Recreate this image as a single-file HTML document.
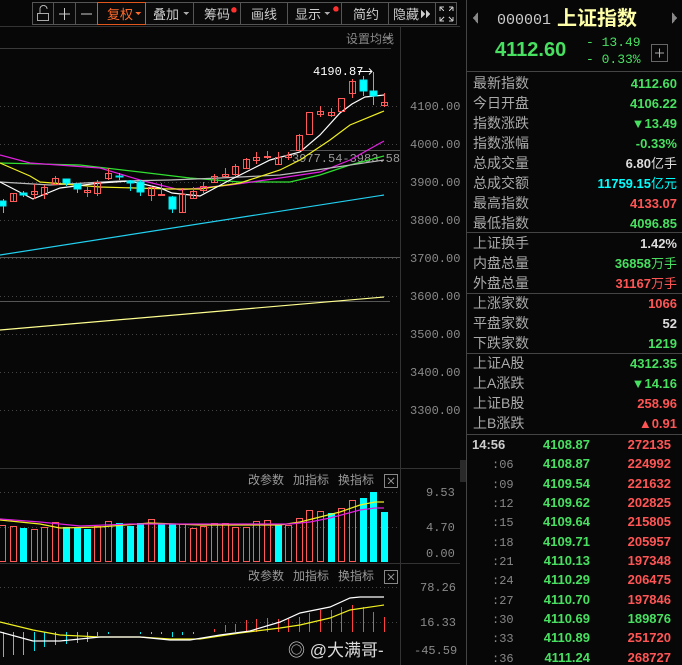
<!DOCTYPE html>
<html><head><meta charset="utf-8"><style>
html,body{margin:0;padding:0;background:#070707;width:682px;height:665px;overflow:hidden}
svg{display:block}
.cn{font-family:"Liberation Sans","Noto Sans CJK SC",sans-serif}
.mono{font-family:"Liberation Mono","DejaVu Sans Mono",monospace}
</style></head><body>
<svg width="682" height="665" viewBox="0 0 682 665" xmlns="http://www.w3.org/2000/svg" shape-rendering="crispEdges">
<rect width="682" height="665" fill="#070707"/>
<!-- toolbar -->
<g stroke="#555" fill="#0a0a0a">
<rect x="32.5" y="2.5" width="424" height="22"/>
</g>
<g stroke="#555">
<line x1="53.5" y1="2" x2="53.5" y2="25"/><line x1="75.5" y1="2" x2="75.5" y2="25"/><line x1="97.5" y1="2" x2="97.5" y2="25"/>
<line x1="145.5" y1="2" x2="145.5" y2="25"/><line x1="193.5" y1="2" x2="193.5" y2="25"/><line x1="240.5" y1="2" x2="240.5" y2="25"/>
<line x1="287.5" y1="2" x2="287.5" y2="25"/><line x1="341.5" y1="2" x2="341.5" y2="25"/><line x1="388.5" y1="2" x2="388.5" y2="25"/>
<line x1="435.5" y1="2" x2="435.5" y2="25"/>
</g>
<rect x="97.5" y="2.5" width="48" height="22" fill="none" stroke="#e0561c"/>
<!-- lock icon -->
<g fill="none" stroke="#aaa" stroke-width="1.2">
<rect x="37.5" y="13.5" width="11" height="7"/><path d="M40 13 V9 a3.5 3.5 0 0 1 7 0"/>
</g>
<g stroke="#ccc" stroke-width="1.2"><line x1="59" y1="14" x2="70" y2="14"/><line x1="64.5" y1="8" x2="64.5" y2="20"/><line x1="81" y1="14" x2="92" y2="14"/></g>
<g class="cn" font-size="13" fill="#ccc">
<text x="107" y="19" fill="#ff6a2a">复权</text>
<text x="153" y="19">叠加</text>
<text x="204" y="19">筹码</text>
<text x="251" y="19">画线</text>
<text x="295" y="19">显示</text>
<text x="353" y="19">简约</text>
<text x="393" y="19">隐藏</text>
<text x="346" y="43" fill="#888" font-size="12">设置均线</text>
</g>
<path d="M135 12 l3 3 l3 -3z" fill="#ff6a2a"/>
<path d="M183 12 l3 3 l3 -3z" fill="#aaa"/>
<path d="M324 12 l3 3 l3 -3z" fill="#aaa"/>
<path d="M385 37 l3 3 l3 -3z" fill="#888"/>
<circle cx="234" cy="10" r="2.8" fill="#ff3030"/><circle cx="336" cy="9" r="2.8" fill="#ff3030"/>
<path d="M421 10 l4 4 l-4 4z M426 10 l4 4 l-4 4z" fill="#ccc"/>
<g stroke="#ccc" fill="none" stroke-width="1"><path d="M440 11 v-4 h4 M453 7 h-4 M453 7 v4 M440 17 v4 h4 M453 21 h-4 M453 21 v-4 M440 7 l4 4 M453 7 l-4 4 M440 21 l4 -4 M453 21 l-4 -4"/></g>
<line x1="0" y1="26.5" x2="460" y2="26.5" stroke="#333"/>
<line x1="0" y1="48.5" x2="391" y2="48.5" stroke="#3a3a3a"/>
<!-- axis -->
<line x1="400.5" y1="26" x2="400.5" y2="665" stroke="#333"/>
<line x1="466.5" y1="0" x2="466.5" y2="665" stroke="#444"/>
<rect x="460" y="460" width="6" height="22" fill="#2a2a2a"/>
<!-- grid -->
<g stroke="#444" stroke-dasharray="1,3">
<line x1="0" y1="106.5" x2="400" y2="106.5"/><line x1="0" y1="144.5" x2="400" y2="144.5"/>
<line x1="0" y1="182.5" x2="400" y2="182.5"/><line x1="0" y1="220.5" x2="400" y2="220.5"/>
<line x1="0" y1="258.5" x2="400" y2="258.5"/><line x1="0" y1="296.5" x2="400" y2="296.5"/>
<line x1="0" y1="334.5" x2="400" y2="334.5"/><line x1="0" y1="372.5" x2="400" y2="372.5"/>
<line x1="0" y1="410.5" x2="400" y2="410.5"/>
<line x1="0" y1="492.5" x2="400" y2="492.5"/><line x1="0" y1="527.5" x2="400" y2="527.5"/>
<line x1="0" y1="587.5" x2="400" y2="587.5"/><line x1="0" y1="622.5" x2="400" y2="622.5"/>
</g>
<g stroke="#555"><line x1="290" y1="150.5" x2="400" y2="150.5"/><line x1="0" y1="257.5" x2="400" y2="257.5"/><line x1="0" y1="301.5" x2="390" y2="301.5"/></g>
<line x1="0" y1="468.5" x2="460" y2="468.5" stroke="#333"/>
<line x1="0" y1="563.5" x2="460" y2="563.5" stroke="#333"/>
<g class="mono" font-size="12" fill="#8a8a8a">
<text x="410" y="110">4100.00</text><text x="410" y="148">4000.00</text><text x="410" y="186">3900.00</text>
<text x="410" y="224">3800.00</text><text x="410" y="262">3700.00</text><text x="410" y="300">3600.00</text>
<text x="410" y="338">3500.00</text><text x="410" y="376">3400.00</text><text x="410" y="414">3300.00</text>
<text x="426" y="496">9.53</text><text x="426" y="531">4.70</text><text x="426" y="557">0.00</text>
<text x="420" y="591">78.26</text><text x="420" y="626">16.33</text><text x="414" y="654">-45.59</text>
<text x="292" y="162" fill="#999">3977.54-3983.58</text>
<text x="313" y="75" fill="#fff">4190.87</text>
</g>
<path d="M358 71.5 h14 M369 68.5 l3 3 l-3 3" stroke="#fff" fill="none" shape-rendering="auto"/>
<!-- long MAs -->
<g fill="none" shape-rendering="auto" stroke-width="1.2">
<polyline points="0,255 384,195" stroke="#22d0f0"/>
<polyline points="0,330 384,297" stroke="#ffff90"/>
<polyline points="0,163 80,165 140,172 190,178 240,182 290,182 320,175 350,165 384,156" stroke="#30e030"/>
<polyline points="0,155 30,163 100,168 140,180 180,190 230,185 280,178 320,172 350,160 384,141" stroke="#e020e0"/>
<polyline points="0,182 50,185 120,181 170,180 220,178 280,175 330,168 384,160" stroke="#bbb"/>
<polyline points="0,163 30,176 40,182 100,187 170,189 200,189 240,183 280,170 300,160 330,140 350,125 384,111" stroke="#f0f020"/>
<polyline points="0,182 33,199 60,188 100,183 130,181 160,188 172,193 200,196 230,180 270,160 300,152 320,135 340,113 352,104 365,97 384,95" stroke="#fff"/>
</g>
<!-- candles -->
<g stroke="#ff5a5a" fill="none">
<line x1="13.5" y1="193" x2="13.5" y2="202"/><rect x="10.5" y="193.5" width="6" height="8"/>
<line x1="34.5" y1="184" x2="34.5" y2="199"/><rect x="31.5" y="191.5" width="6" height="3"/>
<line x1="44.5" y1="185" x2="44.5" y2="199"/><rect x="41.5" y="187.5" width="6" height="7"/>
<line x1="55.5" y1="176" x2="55.5" y2="185"/><rect x="52.5" y="178.5" width="6" height="6"/>
<line x1="87.5" y1="187" x2="87.5" y2="197"/><rect x="84.5" y="190.5" width="6" height="2"/>
<line x1="97.5" y1="180" x2="97.5" y2="196"/><rect x="94.5" y="182.5" width="6" height="11"/>
<line x1="108.5" y1="168" x2="108.5" y2="180"/><rect x="105.5" y="173.5" width="6" height="5"/>
<line x1="151.5" y1="185" x2="151.5" y2="201"/><rect x="148.5" y="187.5" width="6" height="8"/>
<line x1="161.5" y1="183" x2="161.5" y2="195"/><rect x="158.5" y="194.5" width="6" height="1"/>
<line x1="182.5" y1="188" x2="182.5" y2="212"/><rect x="179.5" y="194.5" width="6" height="18"/>
<line x1="193.5" y1="187" x2="193.5" y2="199"/><rect x="190.5" y="191.5" width="6" height="7"/>
<line x1="203.5" y1="182" x2="203.5" y2="193"/><rect x="200.5" y="186.5" width="6" height="4"/>
<line x1="214.5" y1="174" x2="214.5" y2="183"/><rect x="211.5" y="176.5" width="6" height="6"/>
<line x1="225.5" y1="168" x2="225.5" y2="177"/><rect x="222.5" y="174.5" width="6" height="2"/>
<line x1="235.5" y1="164" x2="235.5" y2="176"/><rect x="232.5" y="166.5" width="6" height="8"/>
<line x1="246.5" y1="158" x2="246.5" y2="169"/><rect x="243.5" y="159.5" width="6" height="9"/>
<line x1="256.5" y1="152" x2="256.5" y2="164"/><rect x="253.5" y="157.5" width="6" height="3"/>
<line x1="267.5" y1="151" x2="267.5" y2="159"/><rect x="264.5" y="156.5" width="6" height="1"/>
<line x1="278.5" y1="152" x2="278.5" y2="165"/><rect x="275.5" y="157.5" width="6" height="7"/>
<line x1="288.5" y1="152" x2="288.5" y2="160"/><rect x="285.5" y="155.5" width="6" height="2"/>
<line x1="299.5" y1="134" x2="299.5" y2="151"/><rect x="296.5" y="135.5" width="6" height="15"/>
<rect x="306.5" y="112.5" width="6" height="22"/>
<line x1="320.5" y1="106" x2="320.5" y2="117"/><rect x="317.5" y="111.5" width="6" height="3"/>
<line x1="331.5" y1="108" x2="331.5" y2="117"/><rect x="328.5" y="112.5" width="6" height="3"/>
<rect x="338.5" y="98.5" width="6" height="13"/>
<line x1="352.5" y1="79" x2="352.5" y2="98"/><rect x="349.5" y="81.5" width="6" height="12"/>
<line x1="384.5" y1="93" x2="384.5" y2="107"/><rect x="381.5" y="102.5" width="6" height="3"/>
</g>
<g stroke="#00e8f0" fill="#00ffff">
<line x1="3.5" y1="199" x2="3.5" y2="213"/><rect x="0" y="201" width="6" height="5"/>
<line x1="23.5" y1="191" x2="23.5" y2="197"/><rect x="20" y="193" width="7" height="2"/>
<line x1="66.5" y1="179" x2="66.5" y2="186"/><rect x="63" y="179" width="7" height="4"/>
<line x1="77.5" y1="183" x2="77.5" y2="193"/><rect x="74" y="184" width="7" height="5"/>
<line x1="119.5" y1="173" x2="119.5" y2="180"/><rect x="116" y="176" width="7" height="1"/>
<line x1="130.5" y1="180" x2="130.5" y2="191"/><rect x="127" y="181" width="7" height="2"/>
<line x1="140.5" y1="180" x2="140.5" y2="196"/><rect x="137" y="182" width="7" height="10"/>
<line x1="172.5" y1="196" x2="172.5" y2="213"/><rect x="169" y="197" width="7" height="12"/>
<line x1="363.5" y1="76" x2="363.5" y2="96"/><rect x="360" y="80" width="7" height="11"/>
<line x1="373.5" y1="72" x2="373.5" y2="105"/><rect x="370" y="91" width="7" height="5"/>
</g>
<!-- volume -->
<g class="cn" font-size="12" fill="#999">
<text x="248" y="484">改参数</text><text x="293" y="484">加指标</text><text x="338" y="484">换指标</text>
<text x="248" y="580">改参数</text><text x="293" y="580">加指标</text><text x="338" y="580">换指标</text>
</g>
<g stroke="#888" fill="none"><rect x="384.5" y="474.5" width="13" height="13"/><path d="M388 478 l6 6 M394 478 l-6 6"/>
<rect x="384.5" y="570.5" width="13" height="13"/><path d="M388 574 l6 6 M394 574 l-6 6"/></g>
<g stroke="#ff5a5a" fill="none">
<rect x="-0.5" y="525.5" width="6" height="36"/><rect x="10.5" y="526.5" width="6" height="35"/>
<rect x="31.5" y="529.5" width="6" height="32"/><rect x="41.5" y="527.5" width="6" height="34"/><rect x="52.5" y="522.5" width="6" height="39"/>
<rect x="94.5" y="526.5" width="6" height="35"/><rect x="105.5" y="521.5" width="6" height="40"/>
<rect x="148.5" y="519.5" width="6" height="42"/><rect x="179.5" y="524.5" width="6" height="37"/>
<rect x="190.5" y="528.5" width="6" height="33"/><rect x="200.5" y="526.5" width="6" height="35"/><rect x="211.5" y="523.5" width="6" height="38"/>
<rect x="222.5" y="523.5" width="6" height="38"/><rect x="232.5" y="527.5" width="6" height="34"/><rect x="243.5" y="527.5" width="6" height="34"/>
<rect x="253.5" y="521.5" width="6" height="40"/><rect x="264.5" y="520.5" width="6" height="41"/>
<rect x="285.5" y="525.5" width="6" height="36"/><rect x="296.5" y="518.5" width="6" height="43"/><rect x="306.5" y="510.5" width="6" height="51"/>
<rect x="317.5" y="511.5" width="6" height="50"/><rect x="338.5" y="508.5" width="6" height="53"/><rect x="349.5" y="500.5" width="6" height="61"/>
</g>
<g fill="#00ffff">
<rect x="20" y="528" width="7" height="34"/><rect x="63" y="527" width="7" height="35"/><rect x="74" y="527" width="7" height="35"/>
<rect x="84" y="529" width="7" height="33"/><rect x="116" y="523" width="7" height="39"/><rect x="127" y="526" width="7" height="36"/>
<rect x="137" y="523" width="7" height="39"/><rect x="158" y="524" width="7" height="38"/><rect x="169" y="524" width="7" height="38"/>
<rect x="275" y="524" width="7" height="38"/><rect x="328" y="513" width="7" height="49"/><rect x="360" y="498" width="7" height="64"/>
<rect x="370" y="492" width="7" height="70"/><rect x="381" y="512" width="7" height="50"/>
</g>
<g fill="none" shape-rendering="auto" stroke-width="1.2">
<polyline points="0,520 40,524 60,528 100,527 150,523 200,525 280,525 300,522 320,517 340,512 360,505 375,502 384,502" stroke="#f0f020"/>
<polyline points="0,519 40,522 80,526 130,524 180,524 250,524 290,524 310,522 330,518 345,514 360,510 375,508 384,508" stroke="#e020e0"/>
</g>
<!-- MACD -->
<g stroke="#00e8f0">
<line x1="3.5" y1="632" x2="3.5" y2="657"/><line x1="13.5" y1="632" x2="13.5" y2="655"/><line x1="23.5" y1="632" x2="23.5" y2="655"/>
<line x1="34.5" y1="632" x2="34.5" y2="651"/><line x1="44.5" y1="632" x2="44.5" y2="647"/><line x1="55.5" y1="632" x2="55.5" y2="645"/>
<line x1="66.5" y1="632" x2="66.5" y2="644"/><line x1="77.5" y1="632" x2="77.5" y2="643"/><line x1="87.5" y1="632" x2="87.5" y2="642"/>
<line x1="97.5" y1="632" x2="97.5" y2="636"/><line x1="108.5" y1="632" x2="108.5" y2="634"/><line x1="140.5" y1="632" x2="140.5" y2="634"/>
<line x1="151.5" y1="632" x2="151.5" y2="634"/><line x1="161.5" y1="632" x2="161.5" y2="634"/><line x1="172.5" y1="632" x2="172.5" y2="637"/>
<line x1="182.5" y1="632" x2="182.5" y2="635"/><line x1="193.5" y1="632" x2="193.5" y2="634"/>
</g>
<g stroke="#ff4040">
<line x1="214.5" y1="629" x2="214.5" y2="632"/><line x1="225.5" y1="625" x2="225.5" y2="632"/><line x1="235.5" y1="624" x2="235.5" y2="632"/>
<line x1="246.5" y1="620" x2="246.5" y2="632"/><line x1="256.5" y1="619" x2="256.5" y2="632"/><line x1="267.5" y1="618" x2="267.5" y2="632"/>
<line x1="278.5" y1="619" x2="278.5" y2="632"/><line x1="288.5" y1="619" x2="288.5" y2="632"/><line x1="299.5" y1="617" x2="299.5" y2="632"/>
<line x1="309.5" y1="613" x2="309.5" y2="632"/><line x1="320.5" y1="610" x2="320.5" y2="632"/><line x1="331.5" y1="610" x2="331.5" y2="632"/>
<line x1="341.5" y1="607" x2="341.5" y2="632"/><line x1="352.5" y1="605" x2="352.5" y2="632"/><line x1="363.5" y1="607" x2="363.5" y2="632"/>
<line x1="373.5" y1="612" x2="373.5" y2="632"/><line x1="384.5" y1="617" x2="384.5" y2="632"/>
</g>
<g fill="none" shape-rendering="auto" stroke-width="1.2">
<polyline points="0,622 33,630 60,635 100,637 140,637 170,639 200,639 240,633 280,628 300,625 330,618 350,610 384,605" stroke="#f0f020"/>
<polyline points="0,632 33,641 60,641 100,637 140,637 170,640 190,640 220,635 250,631 280,622 300,613 330,607 350,598 360,597 384,597" stroke="#fff"/>
</g>
<g class="cn" font-size="17" fill="#ddd"><text x="288" y="656">◎ @大满哥-</text></g>
<!-- right panel -->
<path d="M478 12 l-5 6 l5 6z" fill="#888"/><path d="M672 12 l5 6 l-5 6z" fill="#888"/>
<text x="497" y="24" class="mono" font-size="15" fill="#ccc">000001</text>
<text x="557" y="25" class="cn" font-size="20" font-weight="bold" fill="#ffffa8">上证指数</text>
<text x="495" y="56" font-family="Liberation Sans,sans-serif" font-size="20" font-weight="bold" fill="#48e060">4112.60</text>
<g class="mono" font-size="13" fill="#48e060"><text x="586" y="46">- 13.49</text><text x="586" y="63">- 0.33%</text></g>
<rect x="651.5" y="44.5" width="16" height="17" fill="none" stroke="#666"/><path d="M655 53 h9 M659.5 48.5 v9" stroke="#aaa"/>
<g stroke="#444"><line x1="467" y1="71.5" x2="682" y2="71.5"/><line x1="467" y1="232.5" x2="682" y2="232.5"/>
<line x1="467" y1="293.5" x2="682" y2="293.5"/><line x1="467" y1="353.5" x2="682" y2="353.5"/><line x1="467" y1="434.5" x2="682" y2="434.5"/></g>
<g class="cn" font-size="14" fill="#aaa">
<text x="473" y="88">最新指数</text><text x="473" y="108">今日开盘</text><text x="473" y="128">指数涨跌</text><text x="473" y="148">指数涨幅</text>
<text x="473" y="168">总成交量</text><text x="473" y="188">总成交额</text><text x="473" y="208">最高指数</text><text x="473" y="228">最低指数</text>
<text x="473" y="248">上证换手</text><text x="473" y="268">内盘总量</text><text x="473" y="288">外盘总量</text>
<text x="473" y="308">上涨家数</text><text x="473" y="328">平盘家数</text><text x="473" y="348">下跌家数</text>
<text x="473" y="368">上证A股</text><text x="473" y="388">上A涨跌</text><text x="473" y="408">上证B股</text><text x="473" y="428">上B涨跌</text>
</g>
<g class="cn" font-size="13" font-weight="bold" text-anchor="end">
<text x="677" y="88" fill="#48e060">4112.60</text><text x="677" y="108" fill="#48e060">4106.22</text>
<text x="677" y="128" fill="#48e060">▼13.49</text><text x="677" y="148" fill="#48e060">-0.33%</text>
<text x="677" y="168" fill="#ddd">6.80<tspan font-weight="normal">亿手</tspan></text>
<text x="677" y="188" fill="#00ffff">11759.15<tspan font-weight="normal">亿元</tspan></text>
<text x="677" y="208" fill="#ff5555">4133.07</text><text x="677" y="228" fill="#48e060">4096.85</text>
<text x="677" y="248" fill="#ddd">1.42%</text>
<text x="677" y="268" fill="#48e060">36858<tspan font-weight="normal">万手</tspan></text>
<text x="677" y="288" fill="#ff5555">31167<tspan font-weight="normal">万手</tspan></text>
<text x="677" y="308" fill="#ff5555">1066</text><text x="677" y="328" fill="#ddd">52</text><text x="677" y="348" fill="#48e060">1219</text>
<text x="677" y="368" fill="#48e060">4312.35</text><text x="677" y="388" fill="#48e060">▼14.16</text>
<text x="677" y="408" fill="#ff5555">258.96</text><text x="677" y="428" fill="#ff5555">▲0.91</text>
</g>
<g class="cn" font-size="13" font-weight="bold">
<text x="472" y="449" fill="#ccc">14:56</text>
<g fill="#48e060" text-anchor="end">
<text x="590" y="449">4108.87</text><text x="590" y="468">4108.87</text><text x="590" y="488">4109.54</text><text x="590" y="507">4109.62</text>
<text x="590" y="526">4109.64</text><text x="590" y="546">4109.71</text><text x="590" y="565">4110.13</text><text x="590" y="584">4110.29</text>
<text x="590" y="604">4110.70</text><text x="590" y="623">4110.69</text><text x="590" y="642">4110.89</text><text x="590" y="662">4111.24</text>
</g>
<g fill="#ff5555" text-anchor="end">
<text x="671" y="449">272135</text><text x="671" y="468">224992</text><text x="671" y="488">221632</text><text x="671" y="507">202825</text>
<text x="671" y="526">215805</text><text x="671" y="546">205957</text><text x="671" y="565">197348</text><text x="671" y="584">206475</text>
<text x="671" y="604">197846</text><text x="671" y="623" fill="#48e060">189876</text><text x="671" y="642">251720</text><text x="671" y="662">268727</text>
</g>
</g>
<g class="mono" font-size="12" fill="#888">
<text x="492" y="468">:06</text><text x="492" y="488">:09</text><text x="492" y="507">:12</text><text x="492" y="526">:15</text>
<text x="492" y="546">:18</text><text x="492" y="565">:21</text><text x="492" y="584">:24</text><text x="492" y="604">:27</text>
<text x="492" y="623">:30</text><text x="492" y="642">:33</text><text x="492" y="662">:36</text>
</g>
</svg>
</body></html>
